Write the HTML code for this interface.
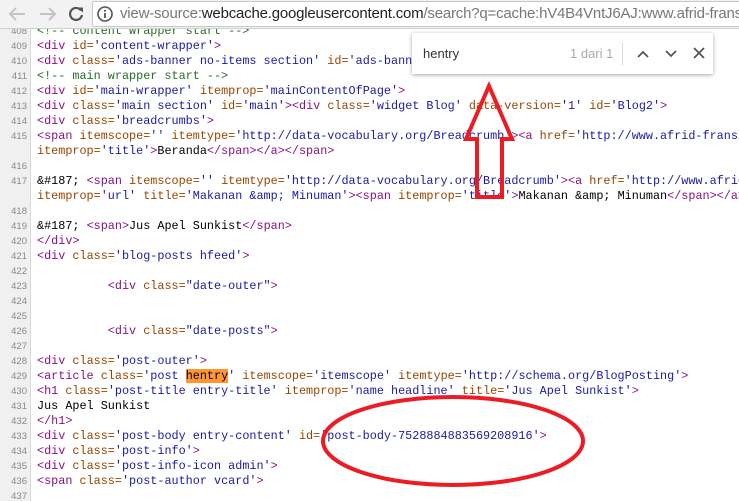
<!DOCTYPE html>
<html><head><meta charset="utf-8"><style>
*{margin:0;padding:0;box-sizing:border-box}
html,body{width:739px;height:501px;overflow:hidden}
body{background:#fff;position:relative;font-family:"Liberation Sans",sans-serif}
#bar{position:absolute;left:0;top:0;width:739px;height:29px;background:#f2f2f2;border-bottom:1px solid #d0d0d0;z-index:2;overflow:hidden}
#addr{position:absolute;left:92px;top:1px;width:660px;height:26px;background:#fff;border:1px solid #c8c8c8;border-radius:2px}
#url{position:absolute;left:120px;top:5px;font-size:15px;color:#777;white-space:nowrap;letter-spacing:-0.2px}
#url b{font-weight:normal;color:#222}
#gut{position:absolute;left:0;top:0;width:31px;height:501px;background:#f0f0f0;border-right:1px solid #d8d8d8}
#code{position:absolute;left:0;top:24px;width:739px;font-family:"Liberation Mono",monospace;font-size:11.8px;line-height:15px}
.r{height:15px;position:relative;overflow:hidden;width:739px}
.n{position:absolute;left:0;width:27px;text-align:right;font-family:"Liberation Sans",sans-serif;font-size:9.5px;color:#888}
.s{position:absolute;left:37px;color:#000;white-space:pre}
.t{color:#881280}.a{color:#994500}.v{color:#1a1aa6}.c{color:#236e25}
.h{background:#ff9632;color:#000}
#find{position:absolute;left:412px;top:33px;width:301px;height:41px;background:#fff;box-shadow:0 1px 4px rgba(0,0,0,.35);z-index:3;font-size:13px}
</style></head><body>
<div id="gut"></div>
<div id="code">
<div class="r"><span class="n">408</span><span class="s c">&lt;!-- content wrapper start --&gt;</span></div>
<div class="r"><span class="n">409</span><span class="s"><span class="t">&lt;div </span><span class="a">id=</span><span class="v">'content-wrapper'</span><span class="t">&gt;</span></span></div>
<div class="r"><span class="n">410</span><span class="s"><span class="t">&lt;div </span><span class="a">class=</span><span class="v">'ads-banner no-items section'</span><span class="a"> id=</span><span class="v">'ads-banner'</span><span class="t">&gt;</span></span></div>
<div class="r"><span class="n">411</span><span class="s c">&lt;!-- main wrapper start --&gt;</span></div>
<div class="r"><span class="n">412</span><span class="s"><span class="t">&lt;div </span><span class="a">id=</span><span class="v">'main-wrapper'</span><span class="a"> itemprop=</span><span class="v">'mainContentOfPage'</span><span class="t">&gt;</span></span></div>
<div class="r"><span class="n">413</span><span class="s"><span class="t">&lt;div </span><span class="a">class=</span><span class="v">'main section'</span><span class="a"> id=</span><span class="v">'main'</span><span class="t">&gt;&lt;div </span><span class="a">class=</span><span class="v">'widget Blog'</span><span class="a"> data-version=</span><span class="v">'1'</span><span class="a"> id=</span><span class="v">'Blog2'</span><span class="t">&gt;</span></span></div>
<div class="r"><span class="n">414</span><span class="s"><span class="t">&lt;div </span><span class="a">class=</span><span class="v">'breadcrumbs'</span><span class="t">&gt;</span></span></div>
<div class="r"><span class="n">415</span><span class="s"><span class="t">&lt;span </span><span class="a">itemscope=</span><span class="v">''</span><span class="a"> itemtype=</span><span class="v">'http://data-vocabulary.org/Breadcrumb'</span><span class="t">&gt;&lt;a </span><span class="a">href=</span><span class="v">'http://www.afrid-fransisco.com/'</span></span></div>
<div class="r"><span class="s"><span class="a">itemprop=</span><span class="v">'title'</span><span class="t">&gt;</span>Beranda<span class="t">&lt;/span&gt;&lt;/a&gt;&lt;/span&gt;</span></span></div>
<div class="r"><span class="n">416</span></div>
<div class="r"><span class="n">417</span><span class="s">&amp;#187; <span class="t">&lt;span </span><span class="a">itemscope=</span><span class="v">''</span><span class="a"> itemtype=</span><span class="v">'http://data-vocabulary.org/Breadcrumb'</span><span class="t">&gt;&lt;a </span><span class="a">href=</span><span class="v">'http://www.afrid-fransisco.com/'</span></span></div>
<div class="r"><span class="s"><span class="a">itemprop=</span><span class="v">'url'</span><span class="a"> title=</span><span class="v">'Makanan &amp;amp; Minuman'</span><span class="t">&gt;&lt;span </span><span class="a">itemprop=</span><span class="v">'title'</span><span class="t">&gt;</span>Makanan &amp;amp; Minuman<span class="t">&lt;/span&gt;&lt;/a&gt;&lt;/span&gt;</span></span></div>
<div class="r"><span class="n">418</span></div>
<div class="r"><span class="n">419</span><span class="s">&amp;#187; <span class="t">&lt;span&gt;</span>Jus Apel Sunkist<span class="t">&lt;/span&gt;</span></span></div>
<div class="r"><span class="n">420</span><span class="s"><span class="t">&lt;/div&gt;</span></span></div>
<div class="r"><span class="n">421</span><span class="s"><span class="t">&lt;div </span><span class="a">class=</span><span class="v">'blog-posts hfeed'</span><span class="t">&gt;</span></span></div>
<div class="r"><span class="n">422</span></div>
<div class="r"><span class="n">423</span><span class="s">          <span class="t">&lt;div </span><span class="a">class=</span><span class="v">"date-outer"</span><span class="t">&gt;</span></span></div>
<div class="r"><span class="n">424</span></div>
<div class="r"><span class="n">425</span></div>
<div class="r"><span class="n">426</span><span class="s">          <span class="t">&lt;div </span><span class="a">class=</span><span class="v">"date-posts"</span><span class="t">&gt;</span></span></div>
<div class="r"><span class="n">427</span></div>
<div class="r"><span class="n">428</span><span class="s"><span class="t">&lt;div </span><span class="a">class=</span><span class="v">'post-outer'</span><span class="t">&gt;</span></span></div>
<div class="r"><span class="n">429</span><span class="s"><span class="t">&lt;article </span><span class="a">class=</span><span class="v">'post <span class="h">hentry</span>'</span><span class="a"> itemscope=</span><span class="v">'itemscope'</span><span class="a"> itemtype=</span><span class="v">'http://schema.org/BlogPosting'</span><span class="t">&gt;</span></span></div>
<div class="r"><span class="n">430</span><span class="s"><span class="t">&lt;h1 </span><span class="a">class=</span><span class="v">'post-title entry-title'</span><span class="a"> itemprop=</span><span class="v">'name headline'</span><span class="a"> title=</span><span class="v">'Jus Apel Sunkist'</span><span class="t">&gt;</span></span></div>
<div class="r"><span class="n">431</span><span class="s">Jus Apel Sunkist</span></div>
<div class="r"><span class="n">432</span><span class="s"><span class="t">&lt;/h1&gt;</span></span></div>
<div class="r"><span class="n">433</span><span class="s"><span class="t">&lt;div </span><span class="a">class=</span><span class="v">'post-body entry-content'</span><span class="a"> id=</span><span class="v">'post-body-7528884883569208916'</span><span class="t">&gt;</span></span></div>
<div class="r"><span class="n">434</span><span class="s"><span class="t">&lt;div </span><span class="a">class=</span><span class="v">'post-info'</span><span class="t">&gt;</span></span></div>
<div class="r"><span class="n">435</span><span class="s"><span class="t">&lt;div </span><span class="a">class=</span><span class="v">'post-info-icon admin'</span><span class="t">&gt;</span></span></div>
<div class="r"><span class="n">436</span><span class="s"><span class="t">&lt;span </span><span class="a">class=</span><span class="v">'post-author vcard'</span><span class="t">&gt;</span></span></div>
<div class="r"><span class="n">437</span></div>
</div>
<div id="bar">
<svg width="92" height="29" style="position:absolute;left:0;top:0">
<g fill="none" stroke="#c4c4c4" stroke-width="2"><path d="M10 14H25M16 8L10 14L16 20"/><path d="M40 14H55M49 8L55 14L49 20"/></g>
<path d="M81 10.5A6 6 0 1 0 82 15" fill="none" stroke="#555" stroke-width="2.2"/><path d="M77.5 7.5L83 7.5L83 12.5Z" fill="#555"/>
</svg>
<div id="addr"></div>
<svg width="20" height="20" style="position:absolute;left:96px;top:5px"><circle cx="9" cy="9" r="7" fill="none" stroke="#555" stroke-width="1.6"/><rect x="8.1" y="8" width="1.8" height="5" fill="#555"/><rect x="8.1" y="5" width="1.8" height="1.8" fill="#555"/></svg>
<div id="url">view-source:<b>webcache.googleusercontent.com</b>/search?q=cache:hV4B4VntJ6AJ:www.afrid-fransisco.com</div>
</div>
<div id="find">
<span style="position:absolute;left:11px;top:13px;color:#333">hentry</span>
<span style="position:absolute;left:158px;top:13px;color:#aaa">1 dari 1</span>
<div style="position:absolute;left:210px;top:9px;width:1px;height:23px;background:#ddd"></div>
<svg width="90" height="41" style="position:absolute;left:220px;top:0"><g fill="none" stroke="#555" stroke-width="1.8"><path d="M6 24L11 19L16 24"/><path d="M34 18L39 23L44 18"/><path d="M62 15L72 25M72 15L62 25"/></g></svg>
</div>
<svg width="739" height="501" style="position:absolute;left:0;top:0;z-index:4">
<g fill="none" stroke="#ed1c24" stroke-width="4">
<path d="M489 86L512 139L502 139L502 197L477 197L477 139L466 139Z"/>
<ellipse cx="453" cy="441" rx="130" ry="44"/>
</g>
</svg>
</body></html>
